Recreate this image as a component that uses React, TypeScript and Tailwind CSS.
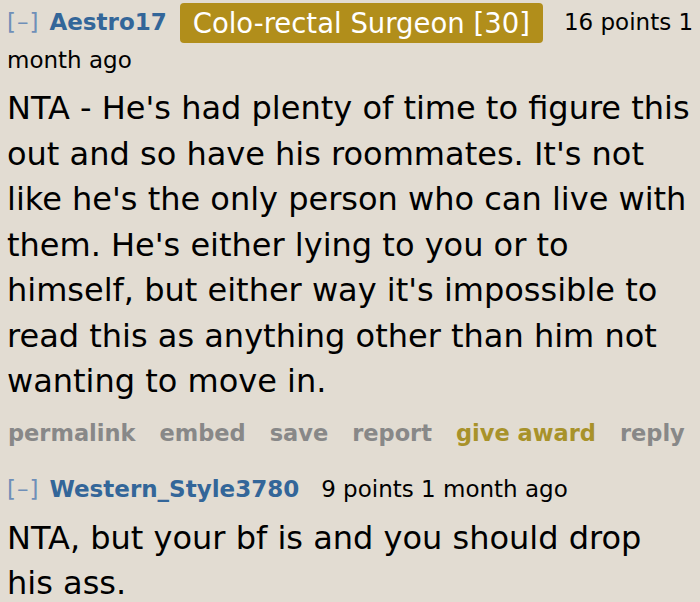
export default function App() {
  return (
    <div
      className="w-[700px] h-[602px] overflow-hidden bg-[#e2dcd2] pl-[7px] text-black"
      style={{ fontFamily: '"DejaVu Sans", Verdana, sans-serif' }}
    >
      {/* first comment */}
      <div className="pt-[3px] text-[23px] leading-[35px]">
        <span className="tracking-[1px] text-[#6f8fb8]">[–]</span>
        <span className="ml-[10px] font-bold text-[#336699]">Aestro17</span>
        <span className="ml-[13px] inline-block align-middle rounded-[4px] bg-[#b18e1b] px-[13px] text-[27.5px] leading-[40px] text-white">
          Colo-rectal Surgeon [30]
        </span>
        <span className="ml-[21px]">16 points 1</span> <span>month ago</span>
      </div>
      <p className="mt-[8px] text-[32px] leading-[45.5px]">
        NTA - He's had plenty of time to figure this
        <br />
        out and so have his roommates. It's not
        <br />
        like he's the only person who can live with
        <br />
        them. He's either lying to you or to
        <br />
        himself, but either way it's impossible to
        <br />
        read this as anything other than him not
        <br />
        wanting to move in.
      </p>
      <div className="mt-[12px] flex gap-[24px] pl-[1px] text-[22.5px] font-bold text-[#888888]">
        <span>permalink</span>
        <span>embed</span>
        <span>save</span>
        <span>report</span>
        <span className="text-[#a8922a]">give award</span>
        <span>reply</span>
      </div>

      {/* second comment */}
      <div className="mt-[22px] flex items-baseline text-[23px]">
        <span className="tracking-[1px] text-[#6f8fb8]">[–]</span>
        <span className="ml-[10px] font-bold text-[#336699]">Western_Style3780</span>
        <span className="ml-[22px]">9 points 1 month ago</span>
      </div>
      <p className="mt-[9px] text-[32px] leading-[45px]">
        NTA, but your bf is and you should drop
        <br />
        his ass.
      </p>
    </div>
  );
}
